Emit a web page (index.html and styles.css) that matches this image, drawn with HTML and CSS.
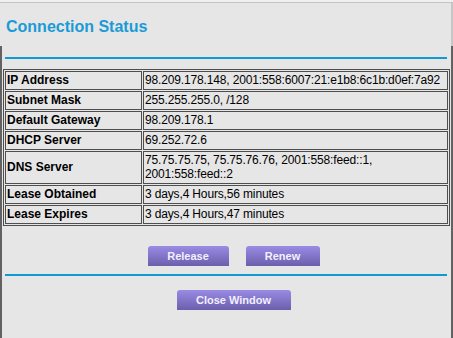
FILE: index.html
```html
<!DOCTYPE html>
<html>
  <head>
    <title>Connection Status</title>
    <link rel="stylesheet" href="styles.css">
  </head>
  <body>
    <div class="header">
      <h1>Connection Status</h1>
    </div>
    <div class="rule"></div>

    <table class="status">
      <tbody>
        <tr>
          <th>IP Address</th>
          <td>98.209.178.148, 2001:558:6007:21:e1b8:6c1b:d0ef:7a92</td>
        </tr>
        <tr>
          <th>Subnet Mask</th>
          <td>255.255.255.0, /128</td>
        </tr>
        <tr>
          <th>Default Gateway</th>
          <td>98.209.178.1</td>
        </tr>
        <tr>
          <th>DHCP Server</th>
          <td>69.252.72.6</td>
        </tr>
        <tr>
          <th>DNS Server</th>
          <td>75.75.75.75, 75.75.76.76, 2001:558:feed::1,<br>2001:558:feed::2</td>
        </tr>
        <tr>
          <th>Lease Obtained</th>
          <td>3 days,4 Hours,56 minutes</td>
        </tr>
        <tr>
          <th>Lease Expires</th>
          <td>3 days,4 Hours,47 minutes</td>
        </tr>
      </tbody>
    </table>

    <div class="buttons">
      <button class="btn btn-release">Release</button>
      <button class="btn btn-renew">Renew</button>
    </div>
    <div class="rule rule-bottom"></div>
    <div class="buttons close-row">
      <button class="btn btn-close">Close Window</button>
    </div>
  </body>
</html>
```

FILE: styles.css
```css
html {
  height: 100%;
}
body {
  margin: 0;
  min-height: 100%;
  font-family: "Liberation Sans", Arial, sans-serif;
  background-color: #e6e6e6;
  background-image:
    linear-gradient(#f0f0f0, #f0f0f0),
    linear-gradient(#c4c4c4, #c4c4c4),
    linear-gradient(#626262, #626262),
    linear-gradient(#c6c6c6, #c6c6c6),
    linear-gradient(#626262, #626262);
  background-size: 100% 2px, 100% 1px, 2px 100%, 2px 46px, 2px 100%;
  background-position: 0 0, 0 2px, 0 46px, 451px 0, 451px 46px;
  background-repeat: no-repeat;
}
.header {
  padding: 18px 0 0 6px;
}
h1 {
  margin: 0;
  font-size: 16px;
  line-height: 18px;
  font-weight: bold;
  color: #1a9bd6;
}
.rule {
  height: 2px;
  margin: 21px 6px 0 5px;
  background-color: #0f9bd2;
}
.status {
  margin: 10px 0 0 3px;
  width: 447px;
  table-layout: fixed;
  border: 1px solid #4e4e4e;
  border-spacing: 1px;
  font-size: 12px;
  line-height: 14px;
  color: #000;
}
.status th,
.status td {
  border: 1px solid #4e4e4e;
  padding: 1px 1px 2px;
  text-align: left;
  vertical-align: middle;
  white-space: nowrap;
  overflow: hidden;
}
.status th {
  width: 133px;
  font-weight: bold;
}
.status td {
  letter-spacing: -0.15px;
}
.buttons {
  display: flex;
  justify-content: center;
  gap: 17px;
  margin: 20px 0 0 14px;
}
.btn {
  height: 20px;
  padding: 0;
  border: none;
  border-radius: 3px 3px 0 0;
  background: linear-gradient(#9a8be4, #6b5fac);
  color: #f2f0ff;
  font-family: "Liberation Sans", Arial, sans-serif;
  font-size: 11px;
  font-weight: bold;
}
.btn-release {
  width: 81px;
}
.btn-renew {
  width: 74px;
}
.btn-close {
  width: 114px;
}
.rule-bottom {
  margin-top: 8px;
}
.close-row {
  margin-top: 14px;
}
```
